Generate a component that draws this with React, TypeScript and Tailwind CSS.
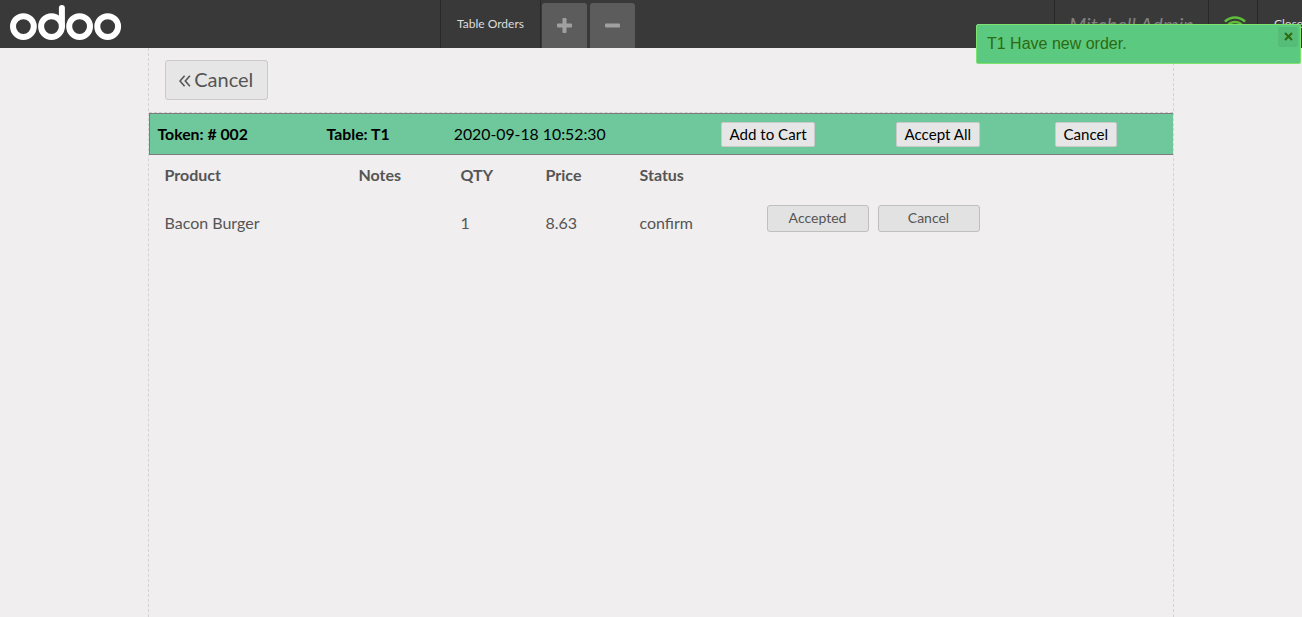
import type { ReactNode } from "react";

function OdooLogo() {
  return (
    <svg className="ml-[10px] mt-[5px] h-[36px] w-[112px] shrink-0" viewBox="0 0 112 36" fill="none" stroke="#fff" strokeWidth="6" strokeLinecap="round">
      <circle cx="13.4" cy="21.6" r="10.4" />
      <circle cx="41.5" cy="21.6" r="10.4" />
      <path d="M51.9 21.6V3" />
      <circle cx="69.6" cy="21.6" r="10.4" />
      <circle cx="97.7" cy="21.6" r="10.4" />
    </svg>
  );
}

function WifiIcon() {
  return (
    <svg className="h-[18px] w-[24px]" viewBox="0 0 24 18" fill="none" stroke="#5ebd3a" strokeWidth="2.5">
      <path d="M1.9 7.6A14.3 14.3 0 0 1 22.1 7.6" />
      <path d="M5.2 10.9A9.6 9.6 0 0 1 18.8 10.9" />
      <path d="M8.6 14.2A4.8 4.8 0 0 1 15.4 14.2" />
      <circle cx="12" cy="16.5" r=".6" />
    </svg>
  );
}

function SquareButton({ children }: { children: ReactNode }) {
  return (
    <button className="mt-[3px] flex h-[45px] w-[45px] items-center justify-center rounded-t-[3px] bg-[#5c5c5c]">
      <svg className="h-[15px] w-[15px]" viewBox="0 0 15 15" fill="#a0a0a0">
        {children}
      </svg>
    </button>
  );
}

function TopBar() {
  return (
    <header className="flex h-12 w-full overflow-hidden bg-[#393939] text-[#ddd]">
      <div className="w-[440px] shrink-0">
        <OdooLogo />
      </div>
      <div className="flex w-[101px] shrink-0 justify-center border-x border-[#292929] text-[12px] leading-[47px]">
        Table Orders
      </div>
      <div className="ml-px flex gap-[3px]">
        <SquareButton>
          <path d="M6.5 0h2q1 0 1 1v4.5H14q1 0 1 1v2q0 1-1 1H9.500V14q0 1-1 1h-2q-1 0-1-1V9.500H1q-1 0-1-1v-2q0-1 1-1h4.500V1q0-1 1-1z" />
        </SquareButton>
        <SquareButton>
          <rect y="5.5" width="15" height="4" rx="1" />
        </SquareButton>
      </div>
      <div className="ml-[419px] w-[154px] shrink-0 border-l border-[#292929] pl-[14px] text-[20px] italic leading-[48px] whitespace-nowrap text-[#808080]">
        Mitchell Admin
      </div>
      <div className="w-[49px] shrink-0 border-l border-[#292929] pl-[14px] pt-[14px]">
        <WifiIcon />
      </div>
      <div className="w-[70px] shrink-0 border-l border-[#292929] pl-4 text-[12px] leading-[47px]">Close</div>
    </header>
  );
}

function Notification() {
  return (
    <div className="absolute left-[976px] top-[24px] flex h-[40px] w-[325px] justify-between rounded-[2px] border border-[#7be36e] bg-[#5bc980] pl-[10px] pr-[2px] pt-[2px] font-['Liberation_Sans',sans-serif] text-[#2d6a10]">
      <span className="text-[16px] leading-[33px]">T1 Have new order.</span>
      <button className="flex h-[20px] w-[20px] items-center justify-center rounded-[2px] bg-[#56bd79]">
        <svg className="-mt-px h-[9px] w-[9px]" viewBox="0 0 9 9" stroke="#2d6a10" strokeWidth="2">
          <path d="M1 1l7 7M8 1L1 8" />
        </svg>
      </button>
    </div>
  );
}

function HeaderButton({ children }: { children: ReactNode }) {
  return (
    <button className="h-[25px] rounded-[2px] border border-[#cacaca] bg-[#e6e6e6] px-[7.5px] text-[15.1px] leading-[23px] whitespace-nowrap">
      {children}
    </button>
  );
}

function LineButton({ children }: { children: ReactNode }) {
  return (
    <button className="flex h-[27px] w-[102px] justify-center rounded-[3px] border border-[#bfbfbf] bg-[#e2e2e2] pr-px text-[14px] leading-[24px]">
      {children}
    </button>
  );
}

export default function App() {
  return (
    <div className="relative flex h-[617px] w-[1302px] flex-col overflow-hidden bg-[#f0eeee] font-[Lato,sans-serif] text-[#555]">
      <TopBar />
      <main className="ml-[148px] w-[1026px] grow border-x border-dashed border-[#d3d3d3]">
        <div className="h-[65px] border-b border-dashed border-[#cecece] pl-4 pt-3">
          <button className="flex h-[40px] w-[103px] items-center rounded-[3px] border border-[#cacaca] bg-[#e6e6e6] pl-[13px] pb-[2px] text-[20px]">
            <svg className="mr-[3.2px] mt-[3px] h-[12px] w-[12px]" viewBox="0 0 12 12" fill="none" stroke="#555" strokeWidth="1.6">
              <path d="M5.600 .8L1 6l4.600 5.200M10.900 .8L6.300 6l4.600 5.200" />
            </svg>
            Cancel
          </button>
        </div>
        <section className="grid h-[42px] grid-cols-[169px_127.25px_267.25px_175px_159px_1fr] items-center border-y border-l border-[#7c7c7c] bg-[#6fc89c] pl-[7.5px] text-[15.8px] text-black">
          <b>Token: # 002</b>
          <b>Table: T1</b>
          <span>2020-09-18 10:52:30</span>
          <div className="flex"><HeaderButton>Add to Cart</HeaderButton></div>
          <div className="flex"><HeaderButton>Accept All</HeaderButton></div>
          <div className="flex"><HeaderButton>Cancel</HeaderButton></div>
        </section>
        <section className="grid grid-cols-[194px_102px_85px_94px_127.5px_1fr] grid-rows-[41px_55px] pl-[15.5px] text-[16px]">
          <b className="leading-[39px]">Product</b>
          <b className="leading-[39px]">Notes</b>
          <b className="leading-[39px]">QTY</b>
          <b className="leading-[39px]">Price</b>
          <b className="leading-[39px]">Status</b>
          <span />
          <span className="leading-[53px]">Bacon Burger</span>
          <span />
          <span className="leading-[53px]">1</span>
          <span className="leading-[53px]">8.63</span>
          <span className="leading-[53px]">confirm</span>
          <div className="flex gap-[9px] pt-[9px]">
            <LineButton>Accepted</LineButton>
            <LineButton>Cancel</LineButton>
          </div>
        </section>
      </main>
      <Notification />
    </div>
  );
}
